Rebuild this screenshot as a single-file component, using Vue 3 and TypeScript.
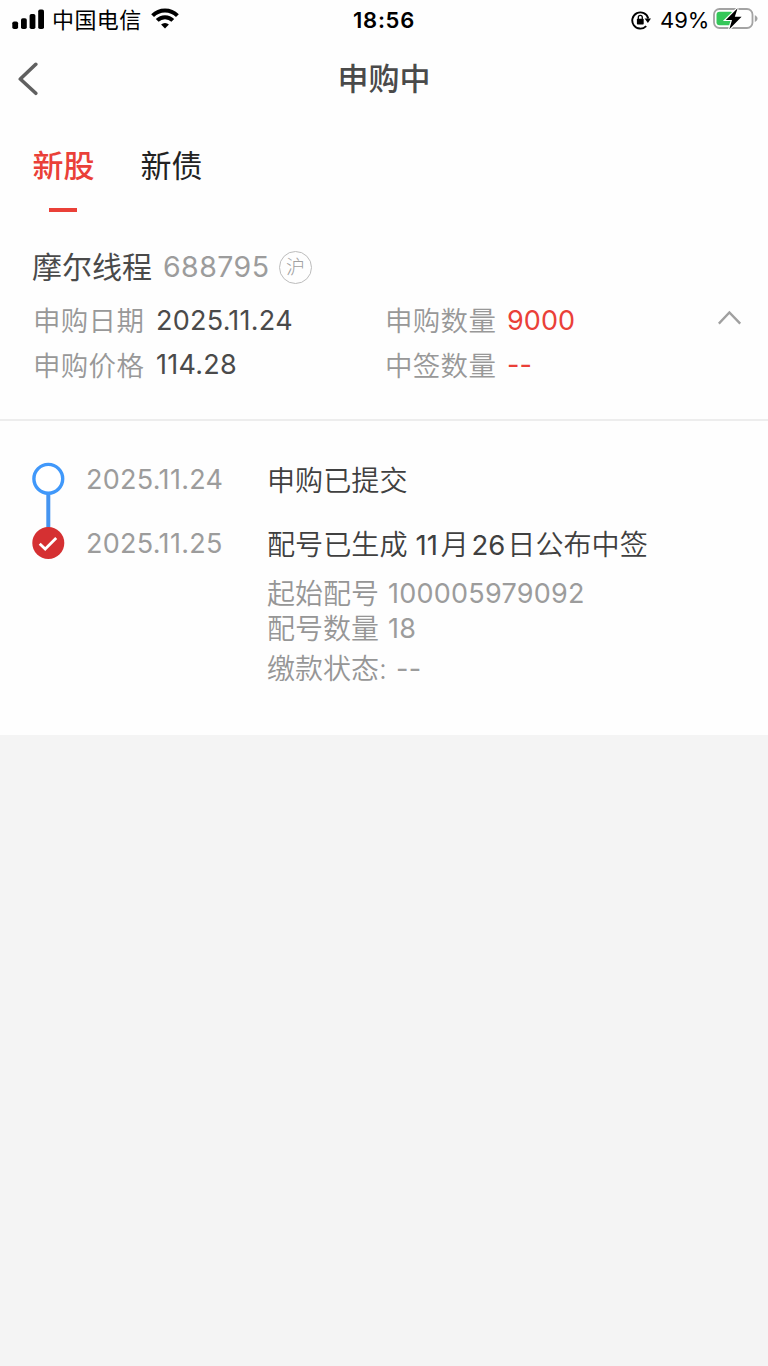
<script setup lang="ts">
interface Field {
  label: string
  value: string
  accent?: boolean
}

const tabs: { name: string; active: boolean }[] = [
  { name: '新股', active: true },
  { name: '新债', active: false },
]

const leftFields: Field[] = [
  { label: '申购日期', value: '2025.11.24' },
  { label: '申购价格', value: '114.28' },
]

const rightFields: Field[] = [
  { label: '申购数量', value: '9000', accent: true },
  { label: '中签数量', value: '--', accent: true },
]
</script>

<template>
  <div class="page">
    <div class="panel">
      <div class="status">
        <div class="status-left">
          <svg class="signal" width="32" height="20" viewBox="0 0 32 20">
            <rect x="0.3" y="12.5" width="5.8" height="7.5" rx="1.8" />
            <rect x="9" y="9.2" width="5.8" height="10.8" rx="1.8" />
            <rect x="17.6" y="5" width="5.8" height="15" rx="1.8" />
            <rect x="26.2" y="0.5" width="5.8" height="19.5" rx="1.8" />
          </svg>
          <span class="carrier">中国电信</span>
          <svg class="wifi" width="28" height="21" viewBox="0 0 28 21">
            <path d="M1.6 7.7A17.6 17.6 0 0 1 26.4 7.7" />
            <path d="M6.2 12.4A11 11 0 0 1 21.8 12.4" />
            <path class="dot" d="M14 20.5L10.1 16.6A5.6 5.6 0 0 1 17.9 16.6Z" />
          </svg>
        </div>
        <div class="time">18:56</div>
        <div class="status-right">
          <svg class="lock" width="20" height="20" viewBox="0 0 20 20">
            <path class="ring" d="M15.2 16.1A8.1 8.1 0 1 1 17.2 8.4" />
            <path d="M13.6 8.6H20L16.9 13Z" />
            <rect x="5.9" y="8.8" width="6.8" height="5.8" rx="0.8" />
            <path class="shackle" d="M7.3 9V7.4A2 2 0 0 1 11.3 7.4V9" />
          </svg>
          <span class="percent">49%</span>
          <svg class="battery" width="45" height="22" viewBox="0 0 45 22">
            <rect class="shell" x="1" y="1" width="38.5" height="19" rx="5.5" />
            <rect class="level" x="3.5" y="3.7" width="17" height="13.6" rx="3" />
            <path class="cap" d="M41.8 7.2C45.4 8.4 45.4 12.8 41.8 14Z" />
            <path class="bolt" d="M24.6 0.3L12.8 11.9H19L16.3 21.2L28.6 8.8H21.8Z" />
          </svg>
        </div>
      </div>

      <header class="nav">
        <svg class="back" width="22" height="34" viewBox="0 0 22 34">
          <path d="M18.8 2.3L3.3 17L18.8 31.3" />
        </svg>
        <h1>申购中</h1>
      </header>

      <nav class="tabs">
        <div v-for="tab in tabs" :key="tab.name" class="tab" :class="{ active: tab.active }">
          <span>{{ tab.name }}</span>
          <i></i>
        </div>
      </nav>

      <section class="stock">
        <div class="stock-title">
          <span class="name">摩尔线程</span>
          <span class="code">688795</span>
          <span class="market">沪</span>
        </div>
        <div class="fields">
          <div class="col left">
            <div v-for="f in leftFields" :key="f.label" class="field">
              <span class="label">{{ f.label }}</span><span class="value">{{ f.value }}</span>
            </div>
          </div>
          <div class="col">
            <div v-for="f in rightFields" :key="f.label" class="field">
              <span class="label">{{ f.label }}</span><span class="value" :class="{ accent: f.accent }">{{ f.value }}</span>
            </div>
          </div>
          <svg class="chevron" width="24" height="16" viewBox="0 0 24 16">
            <path d="M0.8 13.6L11.4 2.4L22.2 13.6" />
          </svg>
        </div>
      </section>

      <section class="timeline">
        <svg class="track" width="34" height="98" viewBox="0 0 34 98">
          <path class="line" d="M17.3 31V66" />
          <circle class="start" cx="17.3" cy="16.8" r="14.4" />
          <circle class="done" cx="17.3" cy="81" r="16" />
          <path class="tick" d="M8.7 81.8L14.2 87L25.2 76" />
        </svg>
        <div class="steps">
          <div class="step">
            <span class="date">2025.11.24</span>
            <span class="text">申购已提交</span>
          </div>
          <div class="step">
            <span class="date">2025.11.25</span>
            <span class="text">配号已生成<b class="month">11</b>月<b class="day">26</b>日公布中签</span>
          </div>
          <div class="details">
            <div class="detail first"><span>起始配号</span><b>100005979092</b></div>
            <div class="detail second"><span>配号数量</span><b>18</b></div>
            <div class="detail third"><span>缴款状态:</span><b>--</b></div>
          </div>
        </div>
      </section>
    </div>
  </div>
</template>

<style>
body {
  margin: 0;
  background: #f4f4f4;
}
</style>

<style scoped>
.page {
  width: 768px;
  height: 1366px;
  overflow: hidden;
  background: #f4f4f4;
  color: #4a4a4a;
  font-family: Inter, "Noto Sans CJK SC", sans-serif;
  white-space: nowrap;
}
.panel {
  box-sizing: border-box;
  height: 735px;
  background: #fefefe;
}
svg {
  display: block;
  flex: none;
}
b {
  font-weight: 400;
}
.status {
  display: grid;
  grid-template-columns: 1fr auto 1fr;
  align-items: center;
  height: 40px;
  padding: 0 10px 0 12px;
  color: #000;
}
.status-left,
.status-right {
  display: flex;
  align-items: center;
}
.status-right {
  justify-content: flex-end;
}
.signal {
  margin-top: -2px;
}
.carrier {
  margin-left: 8px;
  width: 99px;
  font-size: 22px;
  letter-spacing: 0.4px;
  line-height: 40px;
}
.wifi {
  margin-top: -3px;
}
.wifi path {
  fill: none;
  stroke: #000;
  stroke-width: 4;
}
.wifi .dot {
  fill: #000;
  stroke: none;
}
.time {
  margin-left: -2px;
  font-size: 22px;
  font-weight: 600;
  letter-spacing: 0.7px;
}
.lock {
  margin-right: 9px;
}
.lock .ring {
  fill: none;
  stroke: #000;
  stroke-width: 1.9;
}
.lock .shackle {
  fill: none;
  stroke: #000;
  stroke-width: 1.3;
}
.percent {
  width: 53px;
  font-size: 22px;
}
.battery {
  margin-top: -2px;
}
.shell {
  fill: none;
  stroke: #a3a3a3;
  stroke-width: 1.8;
}
.level {
  fill: #35c759;
}
.cap {
  fill: #a3a3a3;
}
.bolt {
  fill: #000;
  stroke: #fff;
  stroke-width: 2.4;
  paint-order: stroke;
}
.nav {
  display: grid;
  grid-template-columns: 100px 1fr 100px;
  align-items: center;
  height: 76px;
}
.back {
  margin-left: 17px;
}
.back path {
  fill: none;
  stroke: #606060;
  stroke-width: 3.6;
  stroke-linecap: round;
  stroke-linejoin: round;
}
h1 {
  margin: 0;
  text-align: center;
  font-size: 31px;
  line-height: 77px;
  font-weight: 500;
}
.tabs {
  display: flex;
  gap: 46px;
  height: 113px;
  padding: 27px 0 0 32.5px;
  box-sizing: border-box;
  color: #222;
}
.tab {
  display: flex;
  flex-direction: column;
  align-items: center;
  font-size: 31px;
  line-height: 46px;
}
.tab i {
  width: 28px;
  height: 4px;
  margin: 19px 1px 0 0;
}
.tab.active {
  color: #ea4038;
  font-weight: 500;
}
.tab.active i {
  background: #ea4038;
}
.stock {
  box-sizing: border-box;
  height: 192px;
  padding: 14px 26px 0 32px;
  border-bottom: 2px solid #ededed;
}
.stock-title {
  display: flex;
  align-items: center;
  height: 48px;
}
.name {
  width: 131px;
  margin-top: -4px;
  font-size: 30px;
}
.code {
  width: 116px;
  margin-top: -1px;
  font-size: 28.5px;
  letter-spacing: 0.45px;
  color: #9c9c9c;
}
.market {
  box-sizing: border-box;
  width: 33px;
  height: 33px;
  border: 1.5px solid #bcbcbc;
  border-radius: 50%;
  font-size: 19px;
  font-weight: 300;
  line-height: 31px;
  text-align: center;
  color: #a0a0a0;
}
.fields {
  display: flex;
  padding-top: 7px;
}
.col {
  flex: 1;
}
.col.left {
  flex: none;
  width: 352px;
}
.field {
  display: flex;
  align-items: center;
  height: 44.5px;
}
.label {
  width: 123px;
  margin-top: -2px;
  padding-left: 1px;
  box-sizing: border-box;
  font-size: 27.5px;
  font-weight: 350;
  letter-spacing: 0.3px;
  color: #989898;
}
.value {
  margin-left: 1px;
  font-size: 27px;
  letter-spacing: 0.25px;
}
.value.accent {
  margin-left: 0;
  letter-spacing: 0.1px;
}
.accent {
  color: #ea4038;
}
.chevron {
  margin: 12px 0 0;
}
.chevron path {
  fill: none;
  stroke: #a0a0a0;
  stroke-width: 2.4;
}
.timeline {
  display: flex;
  padding: 41px 0 0 31px;
}
.line {
  stroke: #4594f0;
  stroke-width: 4;
}
.start {
  fill: #fff;
  stroke: #4098fa;
  stroke-width: 3.4;
}
.done {
  fill: #d53032;
}
.tick {
  fill: none;
  stroke: #fff;
  stroke-width: 2.8;
}
.steps {
  margin: -15px 0 0 21px;
}
.step {
  display: flex;
  align-items: center;
  height: 64px;
}
.date {
  width: 181px;
  font-size: 27px;
  letter-spacing: 0.3px;
  color: #9c9c9c;
}
.text {
  margin-top: -2px;
  font-size: 28.1px;
  font-weight: 350;
  color: #404040;
}
.text b {
  font-size: 27.5px;
}
.month {
  margin: 0 3px 0 8px;
}
.day {
  margin: 0 2px 0 2.5px;
}
.details {
  padding-left: 181px;
  color: #9c9c9c;
}
.detail {
  display: flex;
  align-items: center;
  font-size: 28px;
}
.detail span {
  min-width: 121px;
  margin-top: -1px;
  font-weight: 350;
  color: #969696;
}
.detail b {
  margin-top: 1px;
  font-size: 27px;
  letter-spacing: 0.25px;
}
.first {
  height: 35px;
}
.second {
  height: 35px;
}
.third {
  height: 45px;
}
.third b {
  margin-left: 8px;
}
</style>
